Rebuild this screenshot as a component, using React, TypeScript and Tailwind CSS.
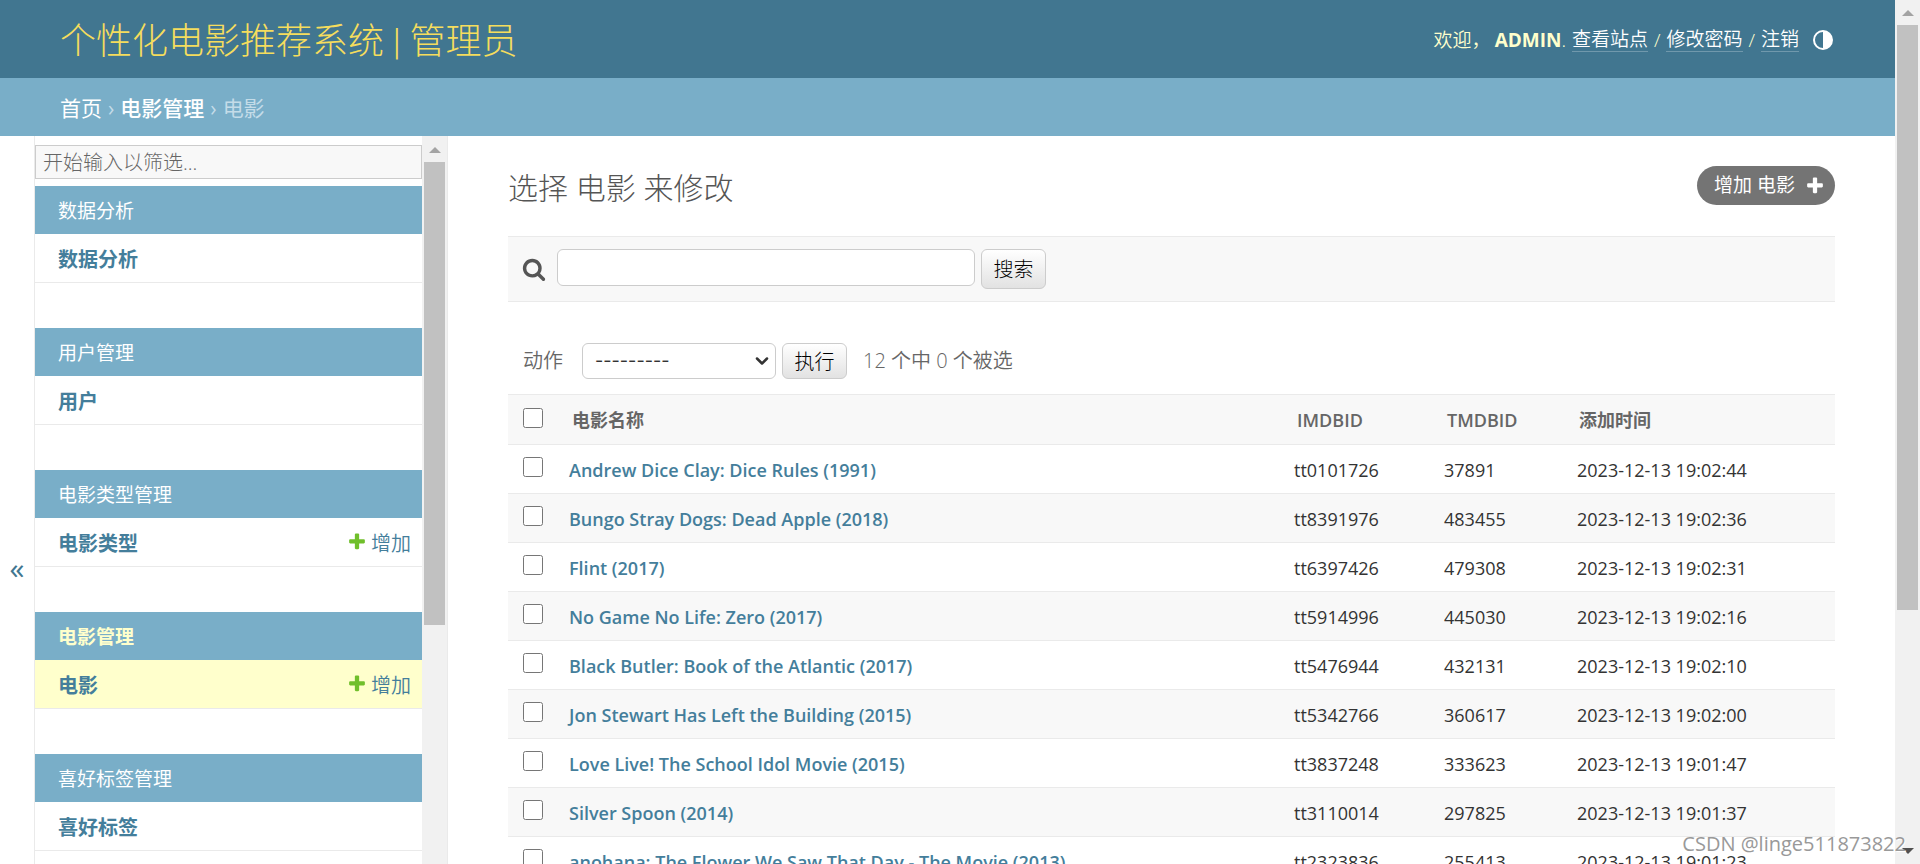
import { useState } from 'react';
import { ChevronDown } from 'lucide-react';

const FONT = "font-['Open_Sans','Noto_Sans_CJK_SC',sans-serif]";

const apps = [
  { name: '数据分析', model: '数据分析' },
  { name: '用户管理', model: '用户' },
  { name: '电影类型管理', model: '电影类型', canAdd: true },
  { name: '电影管理', model: '电影', canAdd: true, current: true },
  { name: '喜好标签管理', model: '喜好标签' },
];

const movies = [
  { name: 'Andrew Dice Clay: Dice Rules (1991)', imdb: 'tt0101726', tmdb: '37891', added: '2023-12-13 19:02:44' },
  { name: 'Bungo Stray Dogs: Dead Apple (2018)', imdb: 'tt8391976', tmdb: '483455', added: '2023-12-13 19:02:36' },
  { name: 'Flint (2017)', imdb: 'tt6397426', tmdb: '479308', added: '2023-12-13 19:02:31' },
  { name: 'No Game No Life: Zero (2017)', imdb: 'tt5914996', tmdb: '445030', added: '2023-12-13 19:02:16' },
  { name: 'Black Butler: Book of the Atlantic (2017)', imdb: 'tt5476944', tmdb: '432131', added: '2023-12-13 19:02:10' },
  { name: 'Jon Stewart Has Left the Building (2015)', imdb: 'tt5342766', tmdb: '360617', added: '2023-12-13 19:02:00' },
  { name: 'Love Live! The School Idol Movie (2015)', imdb: 'tt3837248', tmdb: '333623', added: '2023-12-13 19:01:47' },
  { name: 'Silver Spoon (2014)', imdb: 'tt3110014', tmdb: '297825', added: '2023-12-13 19:01:37' },
  { name: 'anohana: The Flower We Saw That Day - The Movie (2013)', imdb: 'tt2323836', tmdb: '255413', added: '2023-12-13 19:01:23' },
];

function PlusIcon({ className = '' }: { className?: string }) {
  return (
    <svg viewBox="0 0 1792 1792" className={`w-5 h-5 ${className}`} aria-hidden="true">
      <path
        fill="currentColor"
        d="M1600 736v192q0 40-28 68t-68 28h-416v416q0 40-28 68t-68 28h-192q-40 0-68-28t-28-68v-416h-416q-40 0-68-28t-28-68v-192q0-40 28-68t68-28h416v-416q0-40 28-68t68-28h192q40 0 68 28t28 68v416h416q40 0 68 28t28 68z"
      />
    </svg>
  );
}

function SearchIcon() {
  return (
    <svg viewBox="0 0 1792 1792" className="w-6 h-6 text-[#555]" aria-hidden="true">
      <path
        fill="currentColor"
        d="M1216 832q0-185-131.5-316.5t-316.5-131.5-316.5 131.5-131.5 316.5 131.5 316.5 316.5 131.5 316.5-131.5 131.5-316.5zm512 832q0 52-38 90t-90 38q-54 0-90-38l-343-342q-179 124-399 124-143 0-273.5-55.5t-225-150-150-225-55.5-273.5 55.5-273.5 150-225 225-150 273.5-55.5 273.5 55.5 225 150 150 225 55.5 273.5q0 220-124 399l343 343q37 37 37 90z"
      />
    </svg>
  );
}

function ThemeIcon() {
  return (
    <svg viewBox="0 0 20 20" className="w-5 h-5" aria-hidden="true">
      <circle cx="10" cy="10" r="9" fill="none" stroke="#fff" strokeWidth="2" />
      <path d="M10 1a9 9 0 0 1 0 18z" fill="#fff" />
    </svg>
  );
}

function Arrow({ down = false }: { down?: boolean }) {
  return (
    <svg viewBox="0 0 12 6" className="w-3 h-[6px]" aria-hidden="true">
      {down ? <path d="M0 0h12l-6 6z" fill="#505050" /> : <path d="M0 6h12l-6-6z" fill="#a3a3a3" />}
    </svg>
  );
}

function Header() {
  const link = 'text-white border-b border-white/25 leading-[23px]';
  return (
    <header className="flex items-center justify-between h-[78px] pl-[60px] pr-[62px] bg-[#417690] text-[#ffc]">
      <h1 className="pt-[6px] font-['Roboto','Noto_Sans_CJK_SC',sans-serif] text-4xl font-light text-[#f5dd5d]">
        <a href="#">个性化电影推荐系统 | 管理员</a>
      </h1>
      <div className="flex items-center pt-[2px] text-[19px] font-[350]">
        <span className="mr-1">欢迎，</span>
        <strong className="font-bold">ADMIN</strong>
        <span className="mr-[6px]">.</span>
        <a href="#" className={link}>查看站点</a>
        <span className="mx-[6px]">/</span>
        <a href="#" className={link}>修改密码</a>
        <span className="mx-[6px]">/</span>
        <a href="#" className={link}>注销</a>
        <button type="button" aria-label="切换主题" className="ml-[14px]">
          <ThemeIcon />
        </button>
      </div>
    </header>
  );
}

function Breadcrumbs() {
  return (
    <nav className="flex items-center gap-[6px] h-[58px] px-[60px] pt-[3px] bg-[#79aec8] text-[21px] text-[#c4dce8]">
      <a href="#" className="text-white">首页</a>
      <span>›</span>
      <a href="#" className="text-white font-medium">电影管理</a>
      <span>›</span>
      <span>电影</span>
    </nav>
  );
}

function Sidebar() {
  const [filter, setFilter] = useState('');
  const visible = apps.filter((app) => app.model.includes(filter));

  return (
    <nav className="flex shrink-0 h-screen border-r border-[#eaeaea]">
      <button type="button" aria-label="切换导航" className="w-[35px] border-r border-[#eaeaea] text-[#417690] text-3xl">
        «
      </button>
      <div className="w-[387px] pt-[9px] overflow-hidden">
        <input
          type="text"
          aria-label="筛选导航"
          placeholder="开始输入以筛选..."
          value={filter}
          onChange={(e) => setFilter(e.target.value)}
          className="block w-full h-[34px] mb-[7px] px-[7px] border border-[#ccc] bg-[#f8f8f8] text-xl font-light text-[#333] placeholder:text-[#666]"
        />
        {visible.map((app) => (
          <section key={app.name} className="mb-[45px]">
            <h2 className={`flex items-center h-12 px-[23px] pt-[2px] bg-[#79aec8] text-[19px] ${app.current ? 'font-bold text-[#ffc]' : 'text-white'}`}>
              <a href="#">{app.name}</a>
            </h2>
            <div className={`flex items-center h-[49px] pl-[23px] pr-[11px] pt-[3px] border-b border-[#eaeaea] text-xl text-[#447e9b] ${app.current ? 'bg-[#ffc]' : ''}`}>
              <a href="#" className="font-bold">{app.model}</a>
              {app.canAdd && (
                <a href="#" className="flex items-center gap-1 ml-auto font-[350]">
                  <PlusIcon className="mb-1 text-[#70bf2b]" />
                  增加
                </a>
              )}
            </div>
          </section>
        ))}
      </div>
      <div className="flex flex-col items-center w-[25px] pt-[11px] bg-[#f1f1f1]">
        <Arrow />
        <div className="w-[21px] h-[463px] mt-[9px] bg-[#c1c1c1]" />
      </div>
    </nav>
  );
}

function ChangeList() {
  const [selected, setSelected] = useState<string[]>([]);
  const allSelected = selected.length === movies.length;
  const submit = 'w-[65px] pt-[2px] border border-[#ccc] rounded-md bg-linear-to-b from-white to-[#e2e2e2] text-xl font-light text-black';
  const checkbox = 'block w-5 h-5 mb-1';

  const toggle = (id: string) =>
    setSelected((s) => (s.includes(id) ? s.filter((x) => x !== id) : [...s, id]));

  return (
    <main className="flex-1 min-w-0 px-[60px] pt-[30px] overflow-hidden">
      <div className="flex items-start justify-between mb-[26px]">
        <h1 className="text-3xl leading-[44px] font-light text-[#555]">选择 电影 来修改</h1>
        <a href="#" className="flex items-center gap-[10px] h-[39px] pl-[17px] pr-[10px] rounded-full bg-[#747474] text-[19px] text-white">
          增加 电影
          <PlusIcon />
        </a>
      </div>

      <form onSubmit={(e) => e.preventDefault()} className="flex items-start h-[66px] mb-[41px] pt-3 pl-[14px] border-y border-[#eaeaea] bg-[#f8f8f8]">
        <label htmlFor="searchbar" className="mt-2 mr-[11px]">
          <SearchIcon />
        </label>
        <input id="searchbar" type="text" className="w-[418px] h-[37px] mr-[6px] px-2 border border-[#ccc] rounded-md bg-white text-xl" />
        <button type="submit" className={`${submit} h-10`}>搜索</button>
      </form>

      <form onSubmit={(e) => e.preventDefault()} className="flex items-center mb-[15px] pl-[15px] text-xl font-[350] text-[#666]">
        <label htmlFor="action" className="mr-[19px]">动作</label>
        <div className="relative mr-[6px]">
          <select
            id="action"
            className="block w-[194px] h-9 pl-3 appearance-none border border-[#ccc] rounded-md bg-white font-['Inter','Noto_Sans_CJK_SC',sans-serif] text-lg font-normal text-[#333]"
          >
            <option>---------</option>
            <option>删除所选的 电影</option>
          </select>
          <ChevronDown className="absolute right-1 top-2 w-5 h-5 text-[#333] pointer-events-none" strokeWidth={3} />
        </div>
        <button type="submit" className={`${submit} h-9`}>执行</button>
        <span className="ml-4">12 个中 {selected.length} 个被选</span>
      </form>

      <table className="w-full table-fixed border-collapse text-left text-lg">
        <thead>
          <tr className="h-[50px] border-y border-[#eaeaea] bg-[#f8f8f8] text-[#666]">
            <th className="w-[49px] pl-[15px]">
              <input
                type="checkbox"
                aria-label="全选"
                checked={allSelected}
                onChange={() => setSelected(allSelected ? [] : movies.map((m) => m.imdb))}
                className={checkbox}
              />
            </th>
            <th className="px-[15px] font-bold">电影名称</th>
            <th className="w-[150px] px-[15px] font-semibold">IMDBID</th>
            <th className="w-[133px] px-[15px] font-semibold">TMDBID</th>
            <th className="w-[270px] px-[14px] font-bold">添加时间</th>
          </tr>
        </thead>
        <tbody>
          {movies.map((movie) => (
            <tr key={movie.imdb} className="h-[49px] border-b border-[#eaeaea] even:bg-[#f8f8f8] text-[#333]">
              <td className="pl-[15px]">
                <input
                  type="checkbox"
                  aria-label={movie.name}
                  checked={selected.includes(movie.imdb)}
                  onChange={() => toggle(movie.imdb)}
                  className={checkbox}
                />
              </td>
              <th className="px-3 pt-px font-semibold whitespace-nowrap text-[#447e9b]">
                <a href="#">{movie.name}</a>
              </th>
              <td className="px-3 pt-px">{movie.imdb}</td>
              <td className="px-3 pt-px">{movie.tmdb}</td>
              <td className="px-3 pt-px">{movie.added}</td>
            </tr>
          ))}
        </tbody>
      </table>
    </main>
  );
}

export default function App() {
  return (
    <div className={`relative flex h-screen overflow-hidden bg-white ${FONT}`}>
      <div className="flex flex-col flex-1 min-w-0">
        <Header />
        <Breadcrumbs />
        <div className="flex items-start flex-1 min-h-0">
          <Sidebar />
          <ChangeList />
        </div>
      </div>
      <div className="flex flex-col items-center w-[25px] py-[10px] bg-[#f1f1f1]">
        <Arrow />
        <div className="w-[21px] h-[585px] mt-[9px] mb-auto bg-[#c1c1c1]" />
        <Arrow down />
      </div>
      <div className="absolute right-[14px] bottom-[6px] text-xl text-[#999] [text-shadow:1px_1px_0_#fff]">
        CSDN @linge511873822
      </div>
    </div>
  );
}
